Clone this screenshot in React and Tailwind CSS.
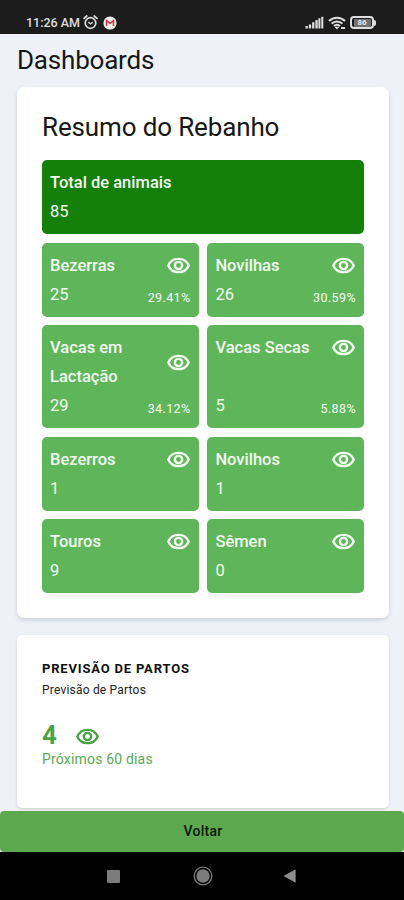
import React from 'react';

const herd = [
    { name: 'Bezerras', total: 25, percent: '29.41%' },
    { name: 'Novilhas', total: 26, percent: '30.59%' },
    { name: 'Vacas em Lactação', total: 29, percent: '34.12%' },
    { name: 'Vacas Secas', total: 5, percent: '5.88%' },
    { name: 'Bezerros', total: 1 },
    { name: 'Novilhos', total: 1 },
    { name: 'Touros', total: 9 },
    { name: 'Sêmen', total: 0 },
];

const EyeIcon = () => (
    <svg className="h-[25px] w-[25px] shrink-0" viewBox="0 0 24 24" fill="none" stroke="currentColor" strokeWidth="2.3">
        <path d="M2.2 12C3.8 8.3 7.6 5.6 12 5.6S20.2 8.3 21.8 12C20.2 15.7 16.4 18.4 12 18.4S3.800 15.7 2.2 12z" />
        <circle cx="12" cy="12" r="3.5" />
    </svg>
);

const StatusBar = () => (
    <header className="flex h-[34px] shrink-0 items-end justify-between bg-[#1c1c1c] pr-[28px] pb-[4px] pl-[26px] text-[#dedede]">
        <div className="flex items-center">
            <span className="w-[57px] text-[12.5px] leading-[15px] font-medium whitespace-nowrap">11:26 AM</span>
            {/* Alarm */}
            <svg className="h-[15px] w-[15px]" viewBox="0 0 15 15" fill="none" stroke="currentColor" strokeWidth="1.7">
                <circle cx="7.5" cy="8" r="5.3" />
                <path d="M1 3.4 3.8 1M14 3.4 11.2 1" strokeLinecap="round" />
                <path d="m5.2 7 2.3 2 2.4-2" strokeWidth="1.3" />
            </svg>
            {/* Mail */}
            <svg className="ml-[5px] h-[14px] w-[14px]" viewBox="0 0 14 14">
                <circle cx="7" cy="7" r="6.6" fill="#f1eeee" />
                <path d="M3.5 10V4.6L7 7.4l3.5-2.8V10" fill="none" stroke="#d5333b" strokeWidth="1.5" />
            </svg>
        </div>
        <div className="flex items-center pb-[0.5px]">
            {/* Signal */}
            <svg className="h-[13px] w-[19px]" viewBox="0 0 19 13" fill="currentColor">
                <rect x="0.5" y="10" width="2.3" height="2.5" />
                <rect x="3.8" y="8.5" width="2.3" height="4" />
                <rect x="7.1" y="6.2" width="2.3" height="6.3" />
                <rect x="10.4" y="4" width="2.3" height="8.5" />
                <rect x="13.4" y="2.2" width="2" height="10.3" />
                <rect x="16.3" y="0.8" width="2" height="11.7" />
            </svg>
            {/* Wifi */}
            <svg className="ml-[4px] h-[14px] w-[18px]" viewBox="0 0 18 14" fill="none" stroke="currentColor" strokeWidth="2">
                <path d="M1 5a11.3 11.3 0 0 1 16 0M3.6 7.6a7.7 7.7 0 0 1 10.8 0M6 10a4.2 4.2 0 0 1 6 0" />
                <path d="m7 11 2 2.2 2-2.2z" fill="currentColor" strokeWidth="0.5" />
                <path d="M13 12h4" strokeWidth="2" />
            </svg>
            {/* Battery */}
            <div className="ml-[4px] flex items-center">
                <div className="flex h-[13px] w-[24px] items-center justify-center rounded-[4px] border-2 border-[#dedede]">
                    <span className="flex h-[8px] w-[17px] items-center justify-center rounded-[1px] bg-[#707070] text-[8px] font-bold text-[#e6e6e6]">
                        86
                    </span>
                </div>
                <div className="h-[6px] w-[2px] rounded-r-sm bg-[#dedede]" />
            </div>
        </div>
    </header>
);

const HerdCard = ({ name, total, percent }) => (
    <div className="flex flex-col justify-between rounded-[5px] bg-[#5fb65a] px-[8px] py-[8px] text-[#f2fbf0]">
        <div className="flex items-center justify-between">
            <span className="text-[16.5px] leading-[29px] font-medium">{name}</span>
            <EyeIcon />
        </div>
        <div className="flex items-end justify-between">
            <span className="text-[16.5px] leading-[29px]">{total}</span>
            {percent && <span className="text-[12.5px] leading-[22px] tracking-[0.4px]">{percent}</span>}
        </div>
    </div>
);

const App = () => {
    return (
        <div className="flex h-[900px] w-[404px] flex-col overflow-hidden bg-[#eef2f8] font-[Roboto,sans-serif]">
            <StatusBar />

            {/* Main content */}
            <main className="flex-1 pt-[8px] pr-[15px] pl-[17px]">
                <h1 className="text-[26px] leading-[36px] tracking-[-0.2px] text-[#171717]">Dashboards</h1>

                <section className="mt-[9px] h-[530.5px] rounded-[7px] bg-white px-[25px] pt-[22px] shadow-[0_2px_4px_rgba(60,70,90,0.2)]">
                    <h2 className="text-[26px] leading-[36px] tracking-[-0.14px] text-[#171717]">Resumo do Rebanho</h2>
                    <div className="mt-[15.4px] h-[74px] rounded-[5px] bg-[#14800a] px-[8px] py-[8px] text-[#f2fbf0]">
                        <p className="text-[16.5px] leading-[29px] font-medium">Total de animais</p>
                        <p className="text-[16.5px] leading-[29px]">85</p>
                    </div>
                    <div className="mt-[8.5px] grid grid-cols-2 gap-x-[8.8px] gap-y-[8.4px]">
                        {herd.map((item) => (
                            <HerdCard key={item.name} {...item} />
                        ))}
                    </div>
                </section>

                <section className="mt-[17px] h-[173px] rounded-[5px] bg-white px-[25px] pt-[24px] shadow-[0_1px_3px_rgba(60,70,90,0.2)]">
                    <h3 className="text-[13px] leading-[20px] font-bold tracking-[0.82px] text-[#111]">PREVISÃO DE PARTOS</h3>
                    <p className="mt-[1px] text-[12px] leading-[20px] tracking-[0.2px] text-[#222]">Previsão de Partos</p>
                    <div className="mt-[19px] flex h-[32px] items-center gap-[18px] text-[#4aa344]">
                        <span className="text-[26px] leading-[32px] font-bold">4</span>
                        <div className="pt-[3px]">
                            <EyeIcon />
                        </div>
                    </div>
                    <p className="text-[14px] leading-[16px] tracking-[0.18px] text-[#5aa956]">Próximos 60 dias</p>
                </section>
            </main>

            <div className="h-[41.5px] shrink-0 bg-white">
                <button className="flex h-full w-full items-center justify-center rounded-[4px] bg-[#5ba84f] pl-[2px] text-[14px] font-medium tracking-[0.3px] text-[#0c160b]">
                    Voltar
                </button>
            </div>

            {/* Android navigation */}
            <nav className="flex h-[48px] shrink-0 items-center bg-black">
                <svg className="ml-[107px] h-[13px] w-[13px]" viewBox="0 0 13 13">
                    <rect width="13" height="13" rx="1" fill="#7c7c7c" />
                </svg>
                <svg className="ml-[73px] h-[20px] w-[20px]" viewBox="0 0 20 20">
                    <circle cx="10" cy="10" r="8.8" fill="none" stroke="#7c7c7c" strokeWidth="1.3" />
                    <circle cx="10" cy="10" r="6.7" fill="#7c7c7c" />
                </svg>
                <svg className="ml-[70px] h-[14px] w-[13px]" viewBox="0 0 13 14">
                    <path d="M12.6.2v13.6L.4 7z" fill="#8c8c8c" />
                </svg>
            </nav>
        </div>
    );
};

export default App;
